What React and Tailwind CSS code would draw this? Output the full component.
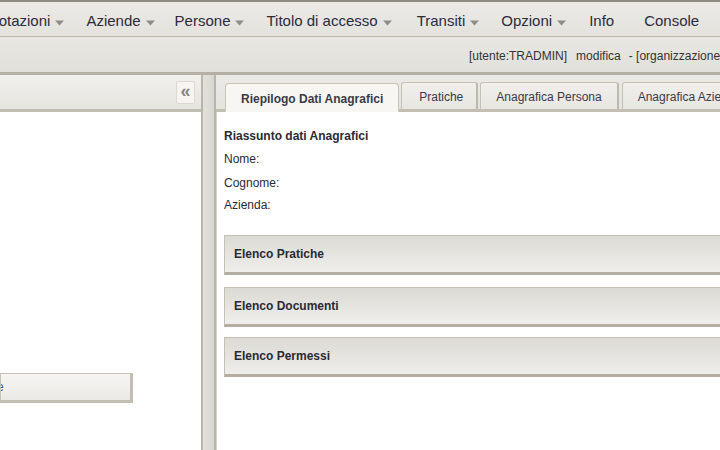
import React from "react";

function Arrow() {
  return (
    <svg width="9" height="6" viewBox="0 0 9 6" className="ml-[5px] mt-[3px]">
      <path d="M0 0.5 H9 L4.5 5.5 Z" fill="#8e8d89" />
    </svg>
  );
}

function MenuItem({ label, arrow = true, className = "" }) {
  return (
    <div className={"flex items-center whitespace-nowrap " + className}>
      <span>{label}</span>
      {arrow && <Arrow />}
    </div>
  );
}

function Panel({ title }) {
  return (
    <div className="h-[40px] ml-[7px] border-t border-l border-[#c4c0b4] border-b-[3px] border-b-[#b3aea1] bg-gradient-to-b from-[#dcdad4] to-[#efeeeb] flex items-center pl-[9px] text-[12px] font-bold text-[#2a2a33]">
      {title}
    </div>
  );
}

export default function App() {
  return (
    <div
      className="w-[720px] h-[450px] overflow-hidden bg-white flex flex-col"
      style={{ fontFamily: '"Liberation Sans", Arial, sans-serif' }}
    >
      <div className="h-[2px] bg-[#8e8b84] shrink-0" />
      {/* menu bar */}
      <div className="h-[35px] shrink-0 bg-gradient-to-b from-[#eceae6] to-[#e4e2dd] border-b border-[#b9b5a9] flex items-center pt-[4px] text-[15px] text-[#2b2b3d] whitespace-nowrap">
        <div className="flex items-center ml-[-33px]">
          <MenuItem label="Prenotazioni" />
          <MenuItem label="Aziende" className="ml-[22px]" />
          <MenuItem label="Persone" className="ml-[20px]" />
          <MenuItem label="Titolo di accesso" className="ml-[22px]" />
          <MenuItem label="Transiti" className="ml-[25px]" />
          <MenuItem label="Opzioni" className="ml-[22px]" />
          <MenuItem label="Info" arrow={false} className="ml-[23px]" />
          <MenuItem label="Console" arrow={false} className="ml-[30px]" />
        </div>
      </div>
      {/* info bar */}
      <div className="h-[35px] shrink-0 bg-gradient-to-b from-[#e9e7e2] to-[#e2e0da] flex items-center pl-[469px] pt-[2px] text-[12px] text-[#333333] whitespace-nowrap">
        <span>[utente:TRADMIN]</span>
        <span className="ml-[9px]">modifica</span>
        <span className="ml-[8px]">- [organizzazione]</span>
      </div>
      <div className="h-[3px] shrink-0 bg-[#b4b0a4]" />
      {/* main */}
      <div className="flex-1 flex min-h-0">
        {/* left panel */}
        <div className="w-[201px] shrink-0 flex flex-col">
          <div className="h-[37px] shrink-0 bg-gradient-to-b from-[#f1f0ec] to-[#e6e4df] border-b-[3px] border-[#c2beb2] flex items-center justify-end pr-[6px]">
            <div className="w-[19px] h-[23px] bg-[#f6f5f2] border border-[#dcd9d1] rounded-[2px] flex items-center justify-center text-[#86847e] text-[18px] font-bold leading-none pb-[3px]">
              «
            </div>
          </div>
          <div className="flex-1 bg-white pt-[261px]">
            <div className="w-[133px] h-[30px] border border-[#c6c2b6] border-r-[3px] border-r-[#c2beb2] border-b-[3px] border-b-[#c2beb2] bg-gradient-to-b from-[#f6f5f3] to-[#ebe9e5] flex items-center text-[12px] text-[#2f5f9a] overflow-hidden">
              <span className="ml-[-4px]">e</span>
            </div>
          </div>
        </div>
        {/* splitter */}
        <div className="w-[15px] shrink-0 border-l-2 border-r-2 border-[#b9b5a9] bg-gradient-to-r from-[#e2e0db] to-[#d9d7d1]" />
        {/* right panel */}
        <div className="flex-1 flex flex-col min-w-0">
          <div className="h-[37px] shrink-0 bg-gradient-to-b from-[#ebe9e5] to-[#e5e3de] border-b-[3px] border-[#c2beb2] flex items-end pl-[9px] text-[12px] whitespace-nowrap">
            <div className="h-[29px] mb-[-3px] px-[15px] pt-[6px] bg-[#f7f6f3] border border-b-0 border-[#c8c4b8] rounded-t-[4px] font-bold text-[#3a3a48]">
              Riepilogo Dati Anagrafici
            </div>
            <div className="h-[27px] ml-[2px] pl-[17px] pr-[13px] pt-[5px] bg-gradient-to-b from-[#f0efeb] to-[#e8e6e1] border border-b-0 border-[#c4c0b4] border-r-2 border-r-[#bdb9ad] rounded-t-[3px] text-[#3a3a48]">
              Pratiche
            </div>
            <div className="h-[27px] ml-[2px] px-[15px] pt-[5px] bg-gradient-to-b from-[#f0efeb] to-[#e8e6e1] border border-b-0 border-[#c4c0b4] border-r-2 border-r-[#bdb9ad] rounded-t-[3px] text-[#3a3a48]">
              Anagrafica Persona
            </div>
            <div className="h-[27px] ml-[3px] px-[15px] pt-[5px] bg-gradient-to-b from-[#f0efeb] to-[#e8e6e1] border border-b-0 border-[#c4c0b4] rounded-t-[3px] text-[#3a3a48]">
              Anagrafica Aziende
            </div>
          </div>
          <div className="flex-1 bg-white pt-[16px] border-l border-[#d6d3cb]">
            <div className="pl-[7px] text-[12px] leading-[16px] text-[#2a2a33]">
              <div className="font-bold">Riassunto dati Anagrafici</div>
              <div className="mt-[7px]">Nome:</div>
              <div className="mt-[8px]">Cognome:</div>
              <div className="mt-[6px]">Azienda:</div>
            </div>
            <div className="mt-[22px] flex flex-col">
              <Panel title="Elenco Pratiche" />
              <div className="h-[12px]" />
              <Panel title="Elenco Documenti" />
              <div className="h-[10px]" />
              <Panel title="Elenco Permessi" />
            </div>
          </div>
        </div>
      </div>
    </div>
  );
}
